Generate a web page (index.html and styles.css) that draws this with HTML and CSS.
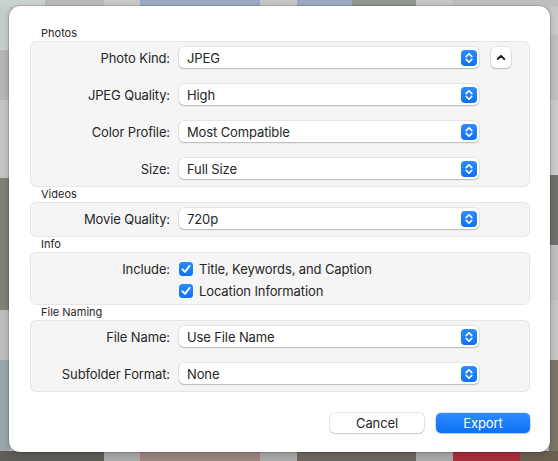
FILE: index.html
```html
<!DOCTYPE html>
<html>
<head>
<meta charset="utf-8">
<link rel="stylesheet" href="styles.css">
</head>
<body>
<div class="backdrop"></div>
<div class="sheet">
  <div class="section-title">Photos</div>
  <div class="group">
    <div class="row">
      <div class="lbl">Photo Kind:</div>
      <div class="popup"><span>JPEG</span><span class="chev"><svg viewBox="0 0 16 16" width="16" height="16"><path d="M5.2 6.6 L8 3.8 L10.8 6.6 M5.2 9.4 L8 12.2 L10.8 9.4" fill="none" stroke="#fff" stroke-width="1.6" stroke-linecap="round" stroke-linejoin="round"/></svg></span></div>
      <div class="disclose"><svg viewBox="0 0 20 21" width="20" height="21"><path d="M6.8 12 L10 8.8 L13.2 12" fill="none" stroke="#1f1f1f" stroke-width="1.9" stroke-linecap="round" stroke-linejoin="round"/></svg></div>
    </div>
    <div class="row">
      <div class="lbl">JPEG Quality:</div>
      <div class="popup"><span>High</span><span class="chev"><svg viewBox="0 0 16 16" width="16" height="16"><path d="M5.2 6.6 L8 3.8 L10.8 6.6 M5.2 9.4 L8 12.2 L10.8 9.4" fill="none" stroke="#fff" stroke-width="1.6" stroke-linecap="round" stroke-linejoin="round"/></svg></span></div>
    </div>
    <div class="row">
      <div class="lbl">Color Profile:</div>
      <div class="popup"><span>Most Compatible</span><span class="chev"><svg viewBox="0 0 16 16" width="16" height="16"><path d="M5.2 6.6 L8 3.8 L10.8 6.6 M5.2 9.4 L8 12.2 L10.8 9.4" fill="none" stroke="#fff" stroke-width="1.6" stroke-linecap="round" stroke-linejoin="round"/></svg></span></div>
    </div>
    <div class="row">
      <div class="lbl">Size:</div>
      <div class="popup"><span>Full Size</span><span class="chev"><svg viewBox="0 0 16 16" width="16" height="16"><path d="M5.2 6.6 L8 3.8 L10.8 6.6 M5.2 9.4 L8 12.2 L10.8 9.4" fill="none" stroke="#fff" stroke-width="1.6" stroke-linecap="round" stroke-linejoin="round"/></svg></span></div>
    </div>
  </div>

  <div class="section-title">Videos</div>
  <div class="group">
    <div class="row">
      <div class="lbl">Movie Quality:</div>
      <div class="popup"><span>720p</span><span class="chev"><svg viewBox="0 0 16 16" width="16" height="16"><path d="M5.2 6.6 L8 3.8 L10.8 6.6 M5.2 9.4 L8 12.2 L10.8 9.4" fill="none" stroke="#fff" stroke-width="1.6" stroke-linecap="round" stroke-linejoin="round"/></svg></span></div>
    </div>
  </div>

  <div class="section-title">Info</div>
  <div class="group group-checks">
    <div class="row check-row">
      <div class="lbl">Include:</div>
      <span class="cb"><svg viewBox="0 0 14 14" width="14" height="14"><path d="M3.4 7.3 L6 9.9 L10.6 3.9" fill="none" stroke="#fff" stroke-width="1.9" stroke-linecap="round" stroke-linejoin="round"/></svg></span>
      <span class="cb-text">Title, Keywords, and Caption</span>
    </div>
    <div class="row check-row">
      <div class="lbl"></div>
      <span class="cb"><svg viewBox="0 0 14 14" width="14" height="14"><path d="M3.4 7.3 L6 9.9 L10.6 3.9" fill="none" stroke="#fff" stroke-width="1.9" stroke-linecap="round" stroke-linejoin="round"/></svg></span>
      <span class="cb-text">Location Information</span>
    </div>
  </div>

  <div class="section-title">File Naming</div>
  <div class="group">
    <div class="row">
      <div class="lbl">File Name:</div>
      <div class="popup"><span>Use File Name</span><span class="chev"><svg viewBox="0 0 16 16" width="16" height="16"><path d="M5.2 6.6 L8 3.8 L10.8 6.6 M5.2 9.4 L8 12.2 L10.8 9.4" fill="none" stroke="#fff" stroke-width="1.6" stroke-linecap="round" stroke-linejoin="round"/></svg></span></div>
    </div>
    <div class="row">
      <div class="lbl">Subfolder Format:</div>
      <div class="popup"><span>None</span><span class="chev"><svg viewBox="0 0 16 16" width="16" height="16"><path d="M5.2 6.6 L8 3.8 L10.8 6.6 M5.2 9.4 L8 12.2 L10.8 9.4" fill="none" stroke="#fff" stroke-width="1.6" stroke-linecap="round" stroke-linejoin="round"/></svg></span></div>
    </div>
  </div>

  <div class="actions">
    <button class="btn">Cancel</button>
    <button class="btn primary">Export</button>
  </div>
</div>
</body>
</html>
```

FILE: styles.css
```css
* { box-sizing: border-box; }
html, body { margin: 0; padding: 0; }
body {
  width: 558px;
  height: 461px;
  overflow: hidden;
  position: relative;
  font-family: "Inter", "Liberation Sans", sans-serif;
  color: #262626;
  background-color: #c2c2c2;
}
.backdrop {
  width: 558px;
  height: 461px;
  background:
    linear-gradient(to right, #c9d2cf 0 45px, #b9b9b9 45px 104px, #c9c9c9 104px 140px, #9ba8c5 140px 260px, #c6c6c6 260px 297px, #9da9c2 297px 352px, #8f958f 352px 416px, #c6c6c6 416px 453px, #bfbfbf 453px) top left / 558px 7px no-repeat,
    linear-gradient(to right, #5f5d58 0 104px, #a9a9a9 104px 140px, #9c8580 140px 260px, #a9a9a9 260px 297px, #6c685f 297px 416px, #a9a9a9 416px 453px, #a8303c 453px 520px, #6a6050 520px) bottom left / 558px 10px no-repeat,
    linear-gradient(to bottom, #c5ccc9 0 50px, #b5b5b5 50px 100px, #c4c4c4 100px 178px, #7d8279 178px 310px, #bdbdbd 310px 360px, #9ba5ad 360px) top left / 10px 461px no-repeat,
    linear-gradient(to bottom, #c8c8c8 0 35px, #bfbfbf 35px 100px, #cacaca 100px 175px, #6f6f6b 175px 245px, #bdbdbd 245px 300px, #c4c4c4 300px 360px, #7a7565 360px) top right / 9px 461px no-repeat;
}
.sheet {
  position: absolute;
  left: 9px;
  top: 6px;
  width: 541px;
  height: 446px;
  background: #ffffff;
  border-radius: 11px;
  box-shadow: 0 0 0 0.5px rgba(0,0,0,0.25), 0 2px 6px rgba(0,0,0,0.18);
  padding: 20px 20px 19px 21px;
  display: flex;
  flex-direction: column;
}
.section-title {
  height: 15px;
  line-height: 15px;
  font-size: 11px;
  padding-left: 11px;
  color: #262626;
}
.group {
  width: 500px;
  background: #f5f5f5;
  border: 1px solid #e6e6e6;
  border-radius: 6px;
  padding: 5px 0 7px 0;
  display: flex;
  flex-direction: column;
  gap: 16px;
}
.group-checks {
  gap: 1px;
  padding-bottom: 3px;
}
.row {
  display: flex;
  align-items: center;
  height: 21px;
}
.lbl {
  width: 139px;
  margin-right: 9px;
  text-align: right;
  font-size: 13px;
  letter-spacing: -0.12px;
}
.popup {
  width: 300px;
  height: 21px;
  background: #fff;
  border-radius: 5px;
  box-shadow: 0 0 0 0.5px rgba(0,0,0,0.12), 0 1px 1.5px rgba(0,0,0,0.2);
  display: flex;
  align-items: center;
  justify-content: space-between;
  padding: 0 2px 0 8px;
  font-size: 13px;
  letter-spacing: -0.12px;
}
.chev {
  width: 16px;
  height: 16px;
  border-radius: 4px;
  background: linear-gradient(#2f8cff, #0d72f4);
  display: flex;
}
.disclose {
  width: 20px;
  height: 21px;
  margin-left: 12px;
  background: #fff;
  border-radius: 5px;
  box-shadow: 0 0 0 0.5px rgba(0,0,0,0.12), 0 1px 1.5px rgba(0,0,0,0.2);
  display: flex;
}
.cb {
  width: 14px;
  height: 14px;
  border-radius: 3.5px;
  background: linear-gradient(#2a89ff, #0c73f5);
  display: flex;
  margin-right: 6px;
}
.cb-text { font-size: 13px; letter-spacing: -0.12px; }
.actions {
  margin-top: 21px;
  display: flex;
  justify-content: flex-end;
  gap: 12px;
}
.btn {
  width: 94px;
  height: 20px;
  border: none;
  border-radius: 5px;
  font-family: inherit;
  font-size: 13px;
  letter-spacing: -0.12px;
  color: #262626;
  background: #fff;
  box-shadow: 0 0 0 0.5px rgba(0,0,0,0.18), 0 1px 1.5px rgba(0,0,0,0.15);
  padding: 0;
}
.btn.primary {
  color: #fff;
  background: linear-gradient(#2f8cff, #0a70f3);
  box-shadow: 0 0 0 0.5px rgba(0,80,200,0.3), 0 1px 1.5px rgba(0,0,0,0.15);
}
```
